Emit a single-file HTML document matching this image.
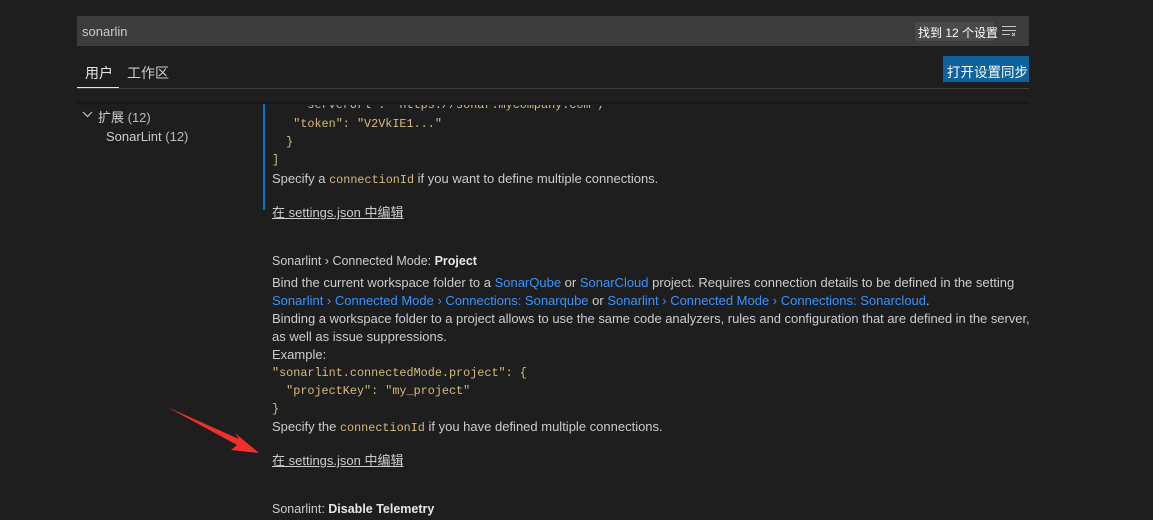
<!DOCTYPE html>
<html><head><meta charset="utf-8"><style>
*{margin:0;padding:0;box-sizing:border-box}
body{width:1153px;height:520px;background:#1e1e1e;overflow:hidden;position:relative;font-family:"Liberation Sans","Noto Sans CJK SC",sans-serif;font-size:13px;color:#cccccc}
.a{position:absolute;white-space:pre}
.code{font-family:"Liberation Mono",monospace;font-size:11.8px;color:#d7ba7d;white-space:pre}
.l{color:#3794ff}
.t{color:#cccccc}
.t b{color:#e7e7e7}
u{text-decoration:underline}
</style></head><body>
<div class="a" style="left:0;top:0;width:1153px;height:2px;background:#252526"></div>
<div class="a code" style="left:272px;top:98px">    "serverUrl": "https://sonar.mycompany.com",</div>
<div class="a" style="left:0;top:0;width:1153px;height:103px;background:#1e1e1e"></div>
<div class="a" style="left:77px;top:16px;width:952px;height:30px;background:#3c3c3c"></div>
<div class="a" style="left:82px;top:24px;font-size:13px;color:#cccccc">sonarlin</div>
<div class="a" style="left:915px;top:22px;width:79px;height:19px;background:#4a4a4a;border-radius:2px"></div>
<div class="a" style="left:918px;top:24px;font-size:12px;color:#fff">找到 12 个设置</div>
<svg class="a" style="left:1000px;top:24px" width="18" height="14"><g stroke="#c5c5c5" stroke-width="1"><line x1="2" y1="2.5" x2="16" y2="2.5"/><line x1="2" y1="6.5" x2="16" y2="6.5"/><line x1="2" y1="10.5" x2="10" y2="10.5"/><line x1="12" y1="9" x2="15" y2="12"/><line x1="15" y1="9" x2="12" y2="12"/></g></svg>
<div class="a" style="left:85px;top:63px;color:#e7e7e7;font-size:14px">用户</div>
<div class="a" style="left:127px;top:63px;color:#cccccc;font-size:14px">工作区</div>
<div class="a" style="left:77px;top:87px;width:42px;height:2px;background:#e7e7e7"></div>
<div class="a" style="left:77px;top:88px;width:952px;height:1px;background:#3f3f3f"></div>
<div class="a" style="left:943px;top:56px;width:86px;height:26px;background:#0e639c"></div>
<div class="a" style="left:947px;top:61px;color:#fff;font-size:13.5px">打开设置同步</div>
<div class="a" style="left:77px;top:102px;width:952px;height:3px;background:linear-gradient(#131313,#1e1e1e)"></div>
<svg class="a" style="left:82px;top:110px" width="12" height="10"><path d="M1 2 L5.5 6.5 L10 2" stroke="#c5c5c5" fill="none" stroke-width="1.2"/></svg>
<div class="a" style="left:98px;top:107px">扩展 <span style="color:#bbb">(12)</span></div>
<div class="a" style="left:106px;top:129px">SonarLint <span style="color:#bbb">(12)</span></div>
<div class="a" style="left:263px;top:104px;width:2px;height:106px;background:#007acc"></div>
<div class="a code" style="left:272px;top:117px">   "token": "V2VkIE1..."</div>
<div class="a code" style="left:272px;top:135px">  }</div>
<div class="a code" style="left:272px;top:153px">]</div>
<div class="a t" style="left:272px;top:171px">Specify a <span class="code">connectionId</span> if you want to define multiple connections.</div>
<div class="a t" style="left:272px;top:202px"><u>在 settings.json 中编辑</u></div>
<div class="a t" style="left:272px;top:254px;font-size:12.5px">Sonarlint › Connected Mode: <b>Project</b></div>
<div class="a t" style="left:272px;top:275px">Bind the current workspace folder to a <span class="l">SonarQube</span> or <span class="l">SonarCloud</span> project. Requires connection details to be defined in the setting</div>
<div class="a" style="left:272px;top:293px"><span class="l">Sonarlint › Connected Mode › Connections: Sonarqube</span> or <span class="l">Sonarlint › Connected Mode › Connections: Sonarcloud</span>.</div>
<div class="a t" style="left:272px;top:311px;letter-spacing:-0.03px">Binding a workspace folder to a project allows to use the same code analyzers, rules and configuration that are defined in the server,</div>
<div class="a t" style="left:272px;top:329px">as well as issue suppressions.</div>
<div class="a t" style="left:272px;top:347px">Example:</div>
<div class="a code" style="left:272px;top:366px">"sonarlint.connectedMode.project": {</div>
<div class="a code" style="left:272px;top:384px">  "projectKey": "my_project"</div>
<div class="a code" style="left:272px;top:402px">}</div>
<div class="a t" style="left:272px;top:419px">Specify the <span class="code">connectionId</span> if you have defined multiple connections.</div>
<div class="a t" style="left:272px;top:450px"><u>在 settings.json 中编辑</u></div>
<div class="a t" style="left:272px;top:502px;font-size:12.5px">Sonarlint: <b>Disable Telemetry</b></div>
<svg class="a" style="left:160px;top:400px" width="110" height="60"><polygon points="7,7 79,39 75,33 99,53 71,50 77,45" fill="#f0302a"/></svg>
</body></html>
